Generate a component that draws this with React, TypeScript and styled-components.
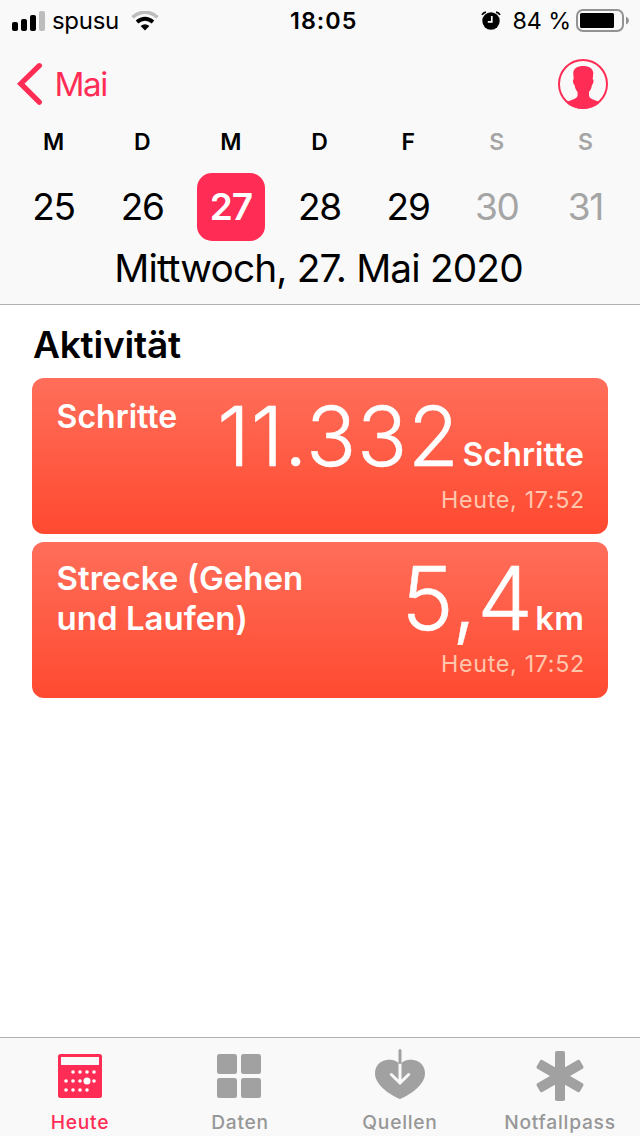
import React from 'react';
import styled, { createGlobalStyle } from 'styled-components';

const pink = '#ff2d55';
const grey = '#a1a1a1';

const GlobalStyle = createGlobalStyle`
  * { box-sizing: border-box; }
  body {
    margin: 0;
    background: #fff;
    font-family: Inter, "Liberation Sans", sans-serif;
    color: #000;
  }
`;

const Screen = styled.div`
  width: 640px;
  height: 1136px;
  display: flex;
  flex-direction: column;
  overflow: hidden;
`;

const Header = styled.header`
  height: 305px;
  background: #f9f9f9;
  border-bottom: 1px solid #b2b2b2;
`;

const StatusBar = styled.div`
  display: grid;
  grid-template-columns: 290px auto 1fr;
  align-items: center;
  height: 42px;
  line-height: 42px;
  font-size: 23.3px;
`;

const StatusLeft = styled.div`
  display: flex;
  align-items: center;
  padding-left: 12px;
`;

const Carrier = styled.span`
  margin: 0 12px 0 7px;
  font-size: 24px;
  letter-spacing: -0.3px;
`;

const Time = styled.span`
  font-weight: 600;
  letter-spacing: 1.05px;
`;

const StatusRight = styled.div`
  display: flex;
  align-items: center;
  justify-content: flex-end;
  padding-right: 11px;
`;

const Percent = styled.span`
  margin: 0 5px 0 12px;
  letter-spacing: -0.1px;
`;

const NavBar = styled.nav`
  display: flex;
  justify-content: space-between;
  align-items: center;
  height: 84px;
  padding: 0 31px 0 16px;
`;

const Back = styled.a`
  display: flex;
  align-items: center;
  gap: 10.5px;
  color: ${pink};
  font-size: 33.2px;
  letter-spacing: -1.4px;
`;

const Week = styled.div`
  display: grid;
  grid-template-columns: repeat(7, 88.67px);
  justify-content: center;
`;

const WeekDay = styled.div<{ $weekend?: boolean }>`
  height: 31px;
  padding-right: 1px;
  line-height: 33px;
  text-align: center;
  font-size: 23px;
  font-weight: 600;
  color: ${(p) => (p.$weekend ? '#a5a5a5' : '#000')};
`;

const DateCell = styled.div`
  display: flex;
  justify-content: center;
  padding: 16px 0 0;
`;

const DateNumber = styled.div<{ $weekend?: boolean; $selected?: boolean }>`
  width: 68px;
  height: 68px;
  padding-right: 1px;
  line-height: 67px;
  border-radius: 15px;
  text-align: center;
  font-size: 37px;
  letter-spacing: -1.2px;
  font-weight: ${(p) => (p.$selected ? 600 : 400)};
  background: ${(p) => (p.$selected ? pink : 'transparent')};
  color: ${(p) => (p.$selected ? '#fff' : p.$weekend ? '#a5a5a5' : '#000')};
`;

const FullDate = styled.div`
  height: 54px;
  padding-right: 3px;
  line-height: 54px;
  text-align: center;
  font-size: 38.8px;
  letter-spacing: -0.85px;
  white-space: nowrap;
`;

const Main = styled.main`
  flex: 1;
  padding: 6px 32px 0;
`;

const Heading = styled.h1`
  margin: 0;
  height: 67px;
  padding-left: 1px;
  line-height: 67px;
  font-size: 37px;
  font-weight: 600;
  letter-spacing: -0.2px;
`;

const Card = styled.section`
  display: flex;
  justify-content: space-between;
  height: 156px;
  margin-bottom: 8px;
  padding: 0 24px;
  border-radius: 12px;
  color: #fff;
  background: linear-gradient(#ff6e5a, #ff4a30);
`;

const CardLabel = styled.div<{ $size: number; $top: number }>`
  padding: ${(p) => p.$top}px 0 0 0.6px;
  line-height: 40px;
  font-size: ${(p) => p.$size}px;
  font-weight: 600;
  letter-spacing: 0;
  white-space: pre-line;
`;

const Reading = styled.div`
  display: flex;
  flex-direction: column;
  align-items: flex-end;
`;

const Amount = styled.div<{ $top: number }>`
  display: flex;
  align-items: baseline;
  height: 107px;
  padding-top: ${(p) => p.$top}px;
`;

const Value = styled.span<{ $size: number; $spacing: number; $gap: number }>`
  margin-right: ${(p) => p.$gap}px;
  font-size: ${(p) => p.$size}px;
  line-height: 88px;
  font-weight: 300;
  letter-spacing: ${(p) => p.$spacing}px;
  -webkit-text-stroke: 0.5px #fff;
`;

const Unit = styled.span<{ $size: number }>`
  font-size: ${(p) => p.$size}px;
  line-height: 40px;
  font-weight: 600;
  letter-spacing: 0.1px;
`;

const Timestamp = styled.div`
  height: 30px;
  margin-right: -1px;
  line-height: 30px;
  font-size: 23.3px;
  letter-spacing: 0.68px;
  color: #ffc6ae;
`;

const TabBar = styled.footer`
  display: grid;
  grid-template-columns: repeat(4, 1fr);
  height: 99px;
  background: #f9f9f9;
  border-top: 1px solid #b2b2b2;
`;

const Tab = styled.a<{ $active?: boolean }>`
  display: flex;
  flex-direction: column;
  align-items: center;
  padding-top: 10px;
  color: ${(p) => (p.$active ? pink : grey)};
`;

const TabLabel = styled.span<{ $active?: boolean }>`
  margin: 6px 0 0;
  line-height: 24px;
  font-size: 19.2px;
  font-weight: 500;
  letter-spacing: 0.75px;
  white-space: nowrap;
  color: ${(p) => (p.$active ? pink : '#979797')};
`;

const Signal = () => (
  <svg width="33" height="20" viewBox="0 0 33 20">
    <rect x="0" y="11" width="6" height="9" rx="2" />
    <rect x="9" y="8" width="6" height="12" rx="2" />
    <rect x="18" y="4" width="6" height="16" rx="2" />
    <rect x="27" y="0" width="6" height="20" rx="2" fill="#bdbdbd" />
  </svg>
);

const Wifi = () => (
  <svg width="28" height="20" viewBox="0 0 28 20">
    <path d="M1.5 6.3Q14 -3.800 26.5 6.3" fill="none" stroke="#bdbdbd" strokeWidth="3.6" />
    <path d="M6 10.900Q14 4.400 22 10.900" fill="none" stroke="#000" strokeWidth="3.9" />
    <path d="M9.6 15Q14 11.300 18.4 15L14 19.500Z" />
  </svg>
);

const Alarm = () => (
  <svg width="20" height="20" viewBox="0 0 20 20">
    <circle cx="10" cy="10" r="8.7" />
    <path d="M1 3.8Q2.3 1.3 5 1.1M19 3.8Q17.7 1.3 15 1.1" fill="none" stroke="#000" strokeWidth="1.7" />
    <path d="M10.8 5V10.8H6.800" fill="none" stroke="#f9f9f9" strokeWidth="1.7" />
  </svg>
);

const Battery = () => (
  <svg width="53" height="24" viewBox="0 0 53 24">
    <rect x="1" y="1" width="46" height="21" rx="6" fill="none" stroke="#929292" strokeWidth="2" />
    <rect x="4" y="4" width="34" height="15" rx="1.5" />
    <path d="M50 7.5Q53 8.8 53 11.5Q53 14.2 50 15.5Z" fill="#929292" />
  </svg>
);

const Chevron = () => (
  <svg width="28" height="46" viewBox="0 0 28 46">
    <path d="M23.3 4.7L4.8 22.7L23.3 41.2" fill="none" stroke={pink} strokeWidth="5.3" strokeLinecap="round" />
  </svg>
);

const Avatar = () => (
  <svg width="52" height="52" viewBox="0 0 52 52">
    <clipPath id="avatar"><circle cx="26" cy="26" r="25" /></clipPath>
    <circle cx="26" cy="26" r="24" fill="none" stroke={pink} strokeWidth="2" />
    <path
      clipPath="url(#avatar)"
      fill={pink}
      d="M26 8C32 8 36 10.500 36.300 15L35.700 21.300C37 21.500 36.600 25.500 35 27C34.600 30 33.500 32.200 32 34V37.500C32.300 41.500 37.500 41.300 42 44V52H10V44C14.500 41.300 20 41.500 20.600 37.500V34C19 32.200 18 30 17.500 27C15.800 25.500 15.400 21.500 16.700 21.300L16.200 15C16.500 10.500 20.500 8 26 8Z"
    />
  </svg>
);

const dots = [
  [23, 24], [30, 24], [37, 24], [44, 24],
  [16, 33], [23, 33], [30, 33], [44, 33],
  [16, 42], [23, 42], [30, 42], [37, 42],
];

const CalendarIcon = () => (
  <svg width="60" height="56" viewBox="0 0 60 56">
    <rect x="8" y="6" width="44" height="44" rx="2.500" fill="currentColor" />
    <path d="M11 9H49V17H11Z" fill="#f9f9f9" />
    {dots.map(([x, y]) => (
      <circle key={`${x}-${y}`} cx={x} cy={y} r="1.8" fill="#fff" />
    ))}
    <circle cx="37" cy="33" r="3.500" fill="#fff" />
  </svg>
);

const GridIcon = () => (
  <svg width="60" height="56" viewBox="0 0 60 56" fill="currentColor">
    <rect x="7" y="6" width="20" height="20" rx="2.500" />
    <rect x="31" y="6" width="20" height="20" rx="2.500" />
    <rect x="7" y="30" width="20" height="20" rx="2.500" />
    <rect x="31" y="30" width="20" height="20" rx="2.500" />
  </svg>
);

const HeartIcon = () => (
  <svg width="60" height="56" viewBox="0 0 60 56">
    <path
      d="M30 16.500C33 12.500 38 11.500 42 11.800C49.500 12.500 55 17.500 55 25.500C55 35.500 43 45.500 30 51C17 45.500 5 35.500 5 25.500C5 17.500 10.500 12.500 18 11.800C22 11.500 27 12.500 30 16.500Z"
      fill="currentColor"
    />
    <path d="M30 16V34M21.300 26.500L30 35L38.700 26.500" fill="none" stroke="#f9f9f9" strokeWidth="3" strokeLinecap="round" />
    <path d="M30 9V14" stroke="#f9f9f9" strokeWidth="4.500" />
    <path d="M30 2.500V14.500" stroke="currentColor" strokeWidth="3" strokeLinecap="round" />
  </svg>
);

const AsteriskIcon = () => (
  <svg width="60" height="56" viewBox="0 0 60 56" fill="currentColor">
    {[0, 60, 120].map((angle) => (
      <rect key={angle} x="25" y="3" width="10" height="50" rx="1.800" transform={`rotate(${angle} 30 28)`} />
    ))}
  </svg>
);

const days = [
  { day: 'M', date: 25 },
  { day: 'D', date: 26 },
  { day: 'M', date: 27, selected: true },
  { day: 'D', date: 28 },
  { day: 'F', date: 29 },
  { day: 'S', date: 30, weekend: true },
  { day: 'S', date: 31, weekend: true },
];

const cards = [
  { label: 'Schritte', labelSize: 32, labelTop: 19, value: '11.332', valueSize: 83, spacing: 0.7, gap: 3, unit: 'Schritte', unitSize: 32, top: 14 },
  { label: 'Strecke (Gehen\nund Laufen)', labelSize: 33, labelTop: 16, value: '5,4', valueSize: 88.5, spacing: 0.4, gap: 2, unit: 'km', unitSize: 33, top: 12 },
];

const tabs = [
  { label: 'Heute', Icon: CalendarIcon, active: true },
  { label: 'Daten', Icon: GridIcon },
  { label: 'Quellen', Icon: HeartIcon },
  { label: 'Notfallpass', Icon: AsteriskIcon },
];

export default function App() {
  return (
    <Screen>
      <GlobalStyle />
      <Header>
        <StatusBar>
          <StatusLeft>
            <Signal />
            <Carrier>spusu</Carrier>
            <Wifi />
          </StatusLeft>
          <Time>18:05</Time>
          <StatusRight>
            <Alarm />
            <Percent>84 %</Percent>
            <Battery />
          </StatusRight>
        </StatusBar>
        <NavBar>
          <Back>
            <Chevron />
            Mai
          </Back>
          <Avatar />
        </NavBar>
        <Week>
          {days.map((d) => (
            <WeekDay key={d.date} $weekend={d.weekend}>{d.day}</WeekDay>
          ))}
          {days.map((d) => (
            <DateCell key={d.date}>
              <DateNumber $weekend={d.weekend} $selected={d.selected}>{d.date}</DateNumber>
            </DateCell>
          ))}
        </Week>
        <FullDate>Mittwoch, 27. Mai 2020</FullDate>
      </Header>
      <Main>
        <Heading>Aktivität</Heading>
        {cards.map((c) => (
          <Card key={c.label}>
            <CardLabel $size={c.labelSize} $top={c.labelTop}>{c.label}</CardLabel>
            <Reading>
              <Amount $top={c.top}>
                <Value $size={c.valueSize} $spacing={c.spacing} $gap={c.gap}>{c.value}</Value>
                <Unit $size={c.unitSize}>{c.unit}</Unit>
              </Amount>
              <Timestamp>Heute, 17:52</Timestamp>
            </Reading>
          </Card>
        ))}
      </Main>
      <TabBar>
        {tabs.map(({ label, Icon, active }) => (
          <Tab key={label} $active={active}>
            <Icon />
            <TabLabel $active={active}>{label}</TabLabel>
          </Tab>
        ))}
      </TabBar>
    </Screen>
  );
}
